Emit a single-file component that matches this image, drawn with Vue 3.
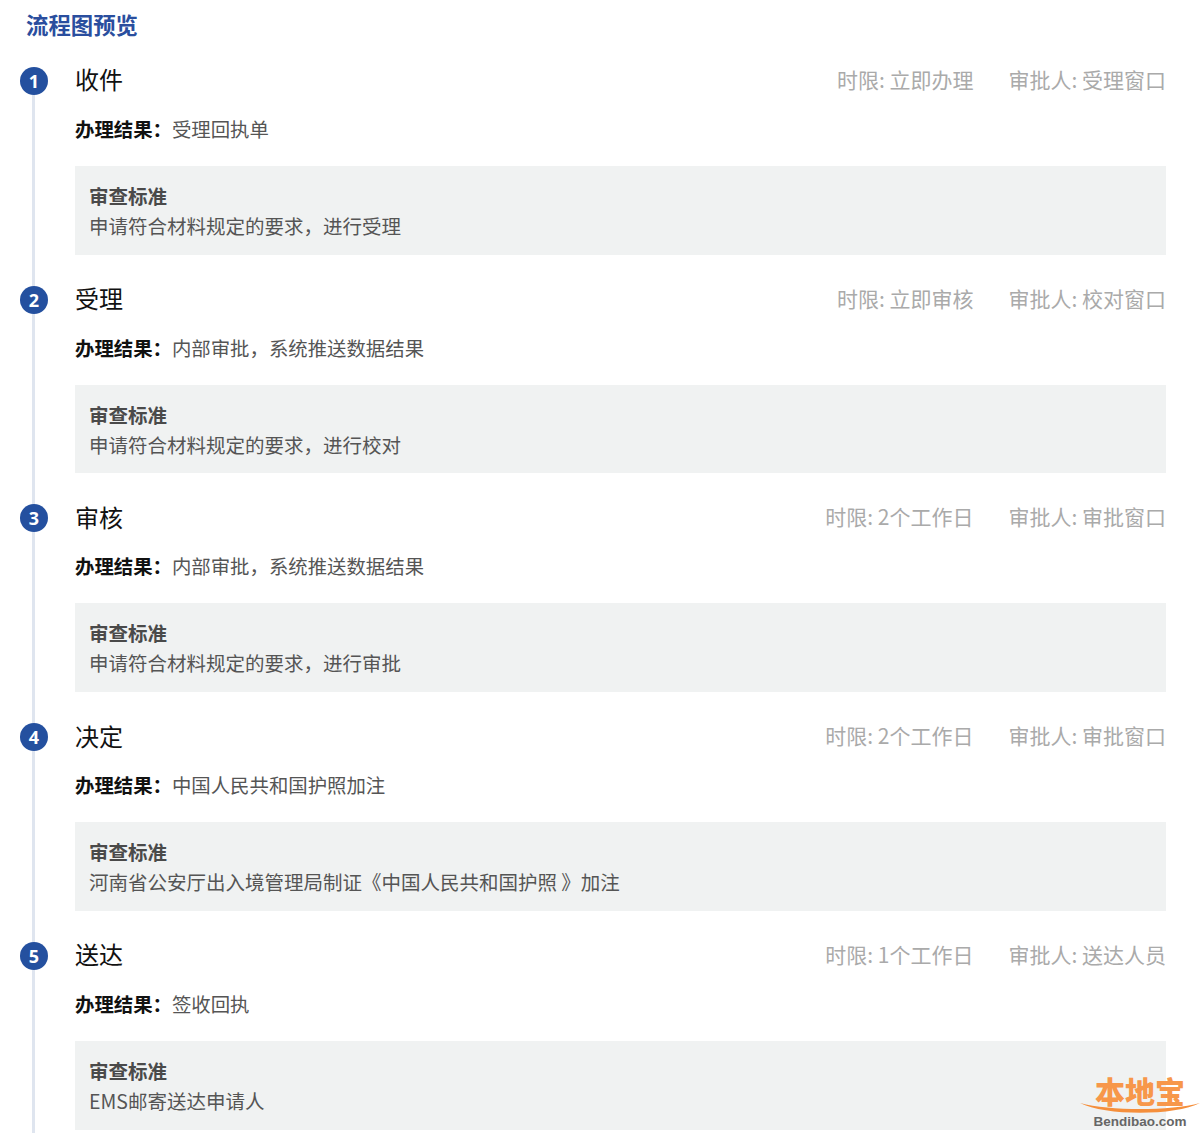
<script setup>
const steps = [
  { n: 1, name: '收件', limit: '立即办理', who: '受理窗口', result: '受理回执单', std: '申请符合材料规定的要求，进行受理' },
  { n: 2, name: '受理', limit: '立即审核', who: '校对窗口', result: '内部审批，系统推送数据结果', std: '申请符合材料规定的要求，进行校对' },
  { n: 3, name: '审核', limit: '2个工作日', who: '审批窗口', result: '内部审批，系统推送数据结果', std: '申请符合材料规定的要求，进行审批' },
  { n: 4, name: '决定', limit: '2个工作日', who: '审批窗口', result: '中国人民共和国护照加注', std: '河南省公安厅出入境管理局制证《中国人民共和国护照 》加注' },
  { n: 5, name: '送达', limit: '1个工作日', who: '送达人员', result: '签收回执', std: 'EMS邮寄送达申请人' }
]
</script>

<template>
  <div class="page">
    <h2 class="title">流程图预览</h2>
    <section v-for="s in steps" :key="s.n" class="step">
      <div class="rail"><span class="num">{{ s.n }}</span></div>
      <div class="body">
        <header class="head">
          <span class="name">{{ s.name }}</span>
          <div class="meta">
            <span>时限: {{ s.limit }}</span>
            <span>审批人: {{ s.who }}</span>
          </div>
        </header>
        <p class="result"><b>办理结果：</b>{{ s.result }}</p>
        <div class="box">
          <strong>审查标准</strong>
          <p>{{ s.std }}</p>
        </div>
      </div>
    </section>
    <div class="logo">
      <span class="logo-cn">本地宝</span>
      <svg class="swoosh" viewBox="0 0 120 12" width="120" height="12">
        <path d="M0 1 C30 9 90 9 120 1 C95 14 25 14 0 1Z" fill="#f58f3c" />
      </svg>
      <span class="logo-en">Bendibao.com</span>
    </div>
  </div>
</template>

<style>
html, body { margin: 0; background: #fff; }
</style>

<style scoped>
.page {
  position: relative;
  height: 1133px;
  overflow: hidden;
  box-sizing: border-box;
  padding: 9px 34px 0 20px;
  font-family: "Noto Sans CJK SC", "Noto Sans", sans-serif;
  color: #444;
}
.title {
  margin: 0 0 21.9px 6px;
  height: 30px;
  line-height: 30px;
  font-size: 22.4px;
  font-weight: 700;
  color: #2a4e9e;
}
.step {
  display: flex;
  height: 218.75px;
}
.rail {
  position: relative;
  width: 28px;
  margin-right: 27px;
  flex: none;
}
.rail::after {
  content: "";
  position: absolute;
  left: 12px;
  width: 3px;
  top: 20px;
  bottom: -20px;
  background: #dfe5ef;
}
.num {
  position: absolute;
  z-index: 1;
  top: 6px;
  left: 0;
  width: 28px;
  height: 28px;
  border-radius: 50%;
  background: #24509f;
  color: #fff;
  font: 700 18px/28px "Open Sans", sans-serif;
  text-align: center;
}
.body { flex: 1; min-width: 0; }
.head {
  display: flex;
  justify-content: space-between;
  align-items: center;
  height: 40px;
  box-sizing: border-box;
  padding-bottom: 4px;
}
.name { font-size: 24px; color: #111; }
.meta {
  display: flex;
  gap: 35px;
  font-size: 21px;
  color: #aaa;
}
.result {
  margin: 11px 0 0;
  height: 34px;
  line-height: 34px;
  font-size: 19.4px;
  color: #555;
}
.result b { color: #111; font-weight: 700; }
.box {
  margin-top: 20px;
  height: 88.75px;
  box-sizing: border-box;
  padding: 15px 14px 0;
  background: #f0f2f2;
  font-size: 19.5px;
  line-height: 30px;
}
.box strong { display: block; font-weight: 700; color: #4a4a4a; }
.box p { margin: 0; color: #555; }
.logo {
  position: absolute;
  right: 0;
  bottom: 4px;
  width: 120px;
  display: flex;
  flex-direction: column;
  align-items: center;
}
.logo-cn {
  height: 30px;
  line-height: 30px;
  font-size: 30px;
  font-weight: 900;
  color: #f7974a;
}
.swoosh { display: block; margin-top: -3px; }
.logo-en {
  margin-top: 1px;
  font: 700 13.5px/14px "Liberation Sans", sans-serif;
  color: #666;
}
</style>
